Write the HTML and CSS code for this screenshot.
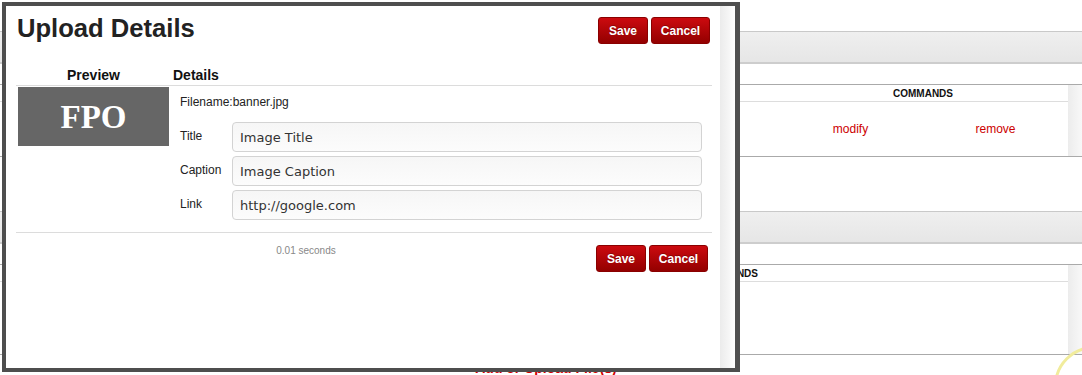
FILE: index.html
```html
<!DOCTYPE html>
<html>
<head>
<meta charset="utf-8">
<link rel="stylesheet" href="styles.css">
</head>
<body>
<div class="page">
  <div class="bar"></div>
  <div class="table t1">
    <div class="tmain">
      <div class="thead"><span></span><span class="cmd">COMMANDS</span></div>
      <div class="trow"><span></span><a class="act">modify</a><a class="act">remove</a></div>
    </div>
    <div class="tside"></div>
  </div>
  <div class="bar bar2"></div>
  <div class="table t2">
    <div class="tmain">
      <div class="thead"><span></span><span class="cmd">COMMANDS</span><span></span></div>
      <div class="trow"></div>
    </div>
    <div class="tside"></div>
  </div>
  <div class="addlink">Add or Upload File(s)</div>
</div>

<div class="ring"></div>

<div class="modal">
  <div class="mbody">
    <div class="mhead">
      <h1 class="mtitle">Upload Details</h1>
      <div class="btns top">
        <button class="btn save">Save</button>
        <button class="btn cancel">Cancel</button>
      </div>
    </div>
    <div class="cols colhead">
      <div class="ch ch-prev">Preview</div>
      <div class="ch ch-det">Details</div>
    </div>
    <div class="cols colbody">
      <div class="prev"><div class="fpo">FPO</div></div>
      <div class="det">
        <div class="fname">Filename:banner.jpg</div>
        <div class="frow"><label class="lbl">Title</label><div class="inp">Image Title</div></div>
        <div class="frow"><label class="lbl">Caption</label><div class="inp">Image Caption</div></div>
        <div class="frow"><label class="lbl">Link</label><div class="inp">http://google.com</div></div>
      </div>
    </div>
    <div class="mfoot">
      <div class="timing">0.01 seconds</div>
      <div class="btns bottom">
        <button class="btn save">Save</button>
        <button class="btn cancel">Cancel</button>
      </div>
    </div>
  </div>
  <div class="mscroll"></div>
</div>
</body>
</html>
```

FILE: styles.css
```css
html, body {
  margin: 0;
  padding: 0;
  background: #fff;
  font-family: "Liberation Sans", Arial, sans-serif;
  width: 1082px;
  height: 375px;
  overflow: hidden;
  position: relative;
}

/* background page */
.page {
  padding-top: 31px;
}
.bar {
  height: 30px;
  border-top: 1px solid #c9c9c9;
  border-bottom: 2px solid #cdcdcd;
  background: linear-gradient(#efefef, #e6e6e6);
  margin-bottom: 20px;
}
.bar2 { margin-top: 54px; }

.table {
  display: flex;
  border-top: 1px solid #aaa;
  border-bottom: 1px solid #aaa;
}
.tmain { flex: 1; }
.tside {
  width: 14px;
  background: linear-gradient(to right, #ececec, #f8f8f8);
}
.thead, .trow {
  display: grid;
  grid-template-columns: 1fr 145px 145px;
}
.thead {
  height: 16px;
  border-bottom: 1px solid #ddd;
  align-items: center;
}
.cmd {
  grid-column: span 2;
  text-align: center;
  font-size: 10px;
  font-weight: bold;
  color: #111;
}
.t1 .trow { height: 54px; align-items: center; }
.act {
  text-align: center;
  color: #cc0000;
  font-size: 12px;
}
.t2 .thead { grid-template-columns: 1fr 260px 210px; }
.t2 .cmd { grid-column: auto; }
.t2 .trow { height: 72px; }

.addlink {
  margin-top: 5px;
  padding-left: 10px;
  text-align: center;
  color: #d40000;
  font-size: 14px;
  font-weight: bold;
  line-height: 16px;
}

.ring {
  position: absolute;
  left: 1054px;
  top: 346px;
  width: 80px;
  height: 80px;
  border: 3px solid #f1ec9c;
  border-radius: 50%;
  box-sizing: border-box;
}

/* modal */
.modal {
  position: absolute;
  left: 2px;
  top: 2px;
  width: 729px;
  height: 362px;
  border: 4px solid #4e4e4e;
  border-right-width: 5px;
  background: #fff;
  display: flex;
  z-index: 5;
}
.mbody {
  flex: 1;
  padding: 0 8px 0 10px;
}
.mscroll {
  width: 15px;
  background: linear-gradient(to right, #ebebeb, #fdfdfd);
}
.mhead {
  display: flex;
  align-items: flex-start;
  padding-top: 7px;
}
.mtitle {
  flex: 1;
  margin: 0 0 0 1px;
  font-size: 25.6px;
  line-height: 30px;
  font-weight: bold;
  color: #222;
}
.btns {
  display: flex;
  gap: 3px;
}
.btns.top { margin-top: 4px; margin-right: 2px; }
.btns.bottom { margin-right: 4px; }
.btn {
  height: 27px;
  padding: 0;
  border: 1px solid #8a0000;
  border-radius: 3px;
  background: linear-gradient(#cc0a0f, #930000);
  color: #fff;
  font-family: "Liberation Sans", Arial, sans-serif;
  font-size: 12px;
  font-weight: bold;
  text-shadow: 0 -1px 0 rgba(0,0,0,0.25);
}
.btn.save { width: 50px; }
.btn.cancel { width: 59px; }

.cols {
  display: grid;
  grid-template-columns: 153px 1fr;
}
.colhead {
  margin-top: 23px;
  padding-bottom: 2px;
  border-bottom: 1px solid #dcdcdc;
}
.ch {
  font-size: 14px;
  line-height: 16px;
  font-weight: bold;
  color: #111;
}
.ch-prev { text-align: center; padding-left: 2px; }
.ch-det { padding-left: 4px; }

.colbody {
  padding-bottom: 12px;
}
.fpo {
  margin: 1px 0 0 2px;
  width: 151px;
  height: 59px;
  background: #666;
  color: #fff;
  font-family: "Liberation Serif", "Times New Roman", serif;
  font-weight: bold;
  font-size: 33px;
  display: flex;
  align-items: center;
  justify-content: center;
  padding-top: 1px;
  box-sizing: border-box;
}
.det {
  padding: 0 10px 0 11px;
}
.fname {
  margin-top: 9px;
  font-size: 12px;
  line-height: 14px;
  color: #222;
  margin-bottom: 13px;
}
.frow {
  display: flex;
  align-items: center;
  margin-bottom: 4px;
}
.frow:last-child { margin-bottom: 0; }
.lbl {
  width: 52px;
  font-size: 12px;
  color: #222;
  margin-top: -2px;
}
.inp {
  flex: 1;
  height: 30px;
  box-sizing: border-box;
  border: 1px solid #d3d3d3;
  border-radius: 4px;
  background: linear-gradient(#f6f6f6, #fcfcfc);
  padding-left: 7px;
  font-family: "DejaVu Sans", Verdana, sans-serif;
  font-size: 13px;
  color: #333;
  display: flex;
  align-items: center;
}

.mfoot {
  display: flex;
  align-items: flex-start;
  border-top: 1px solid #dcdcdc;
  padding-top: 12px;
}
.timing {
  flex: 1;
  text-align: center;
  font-size: 10px;
  line-height: 12px;
  color: #888;
}
```
